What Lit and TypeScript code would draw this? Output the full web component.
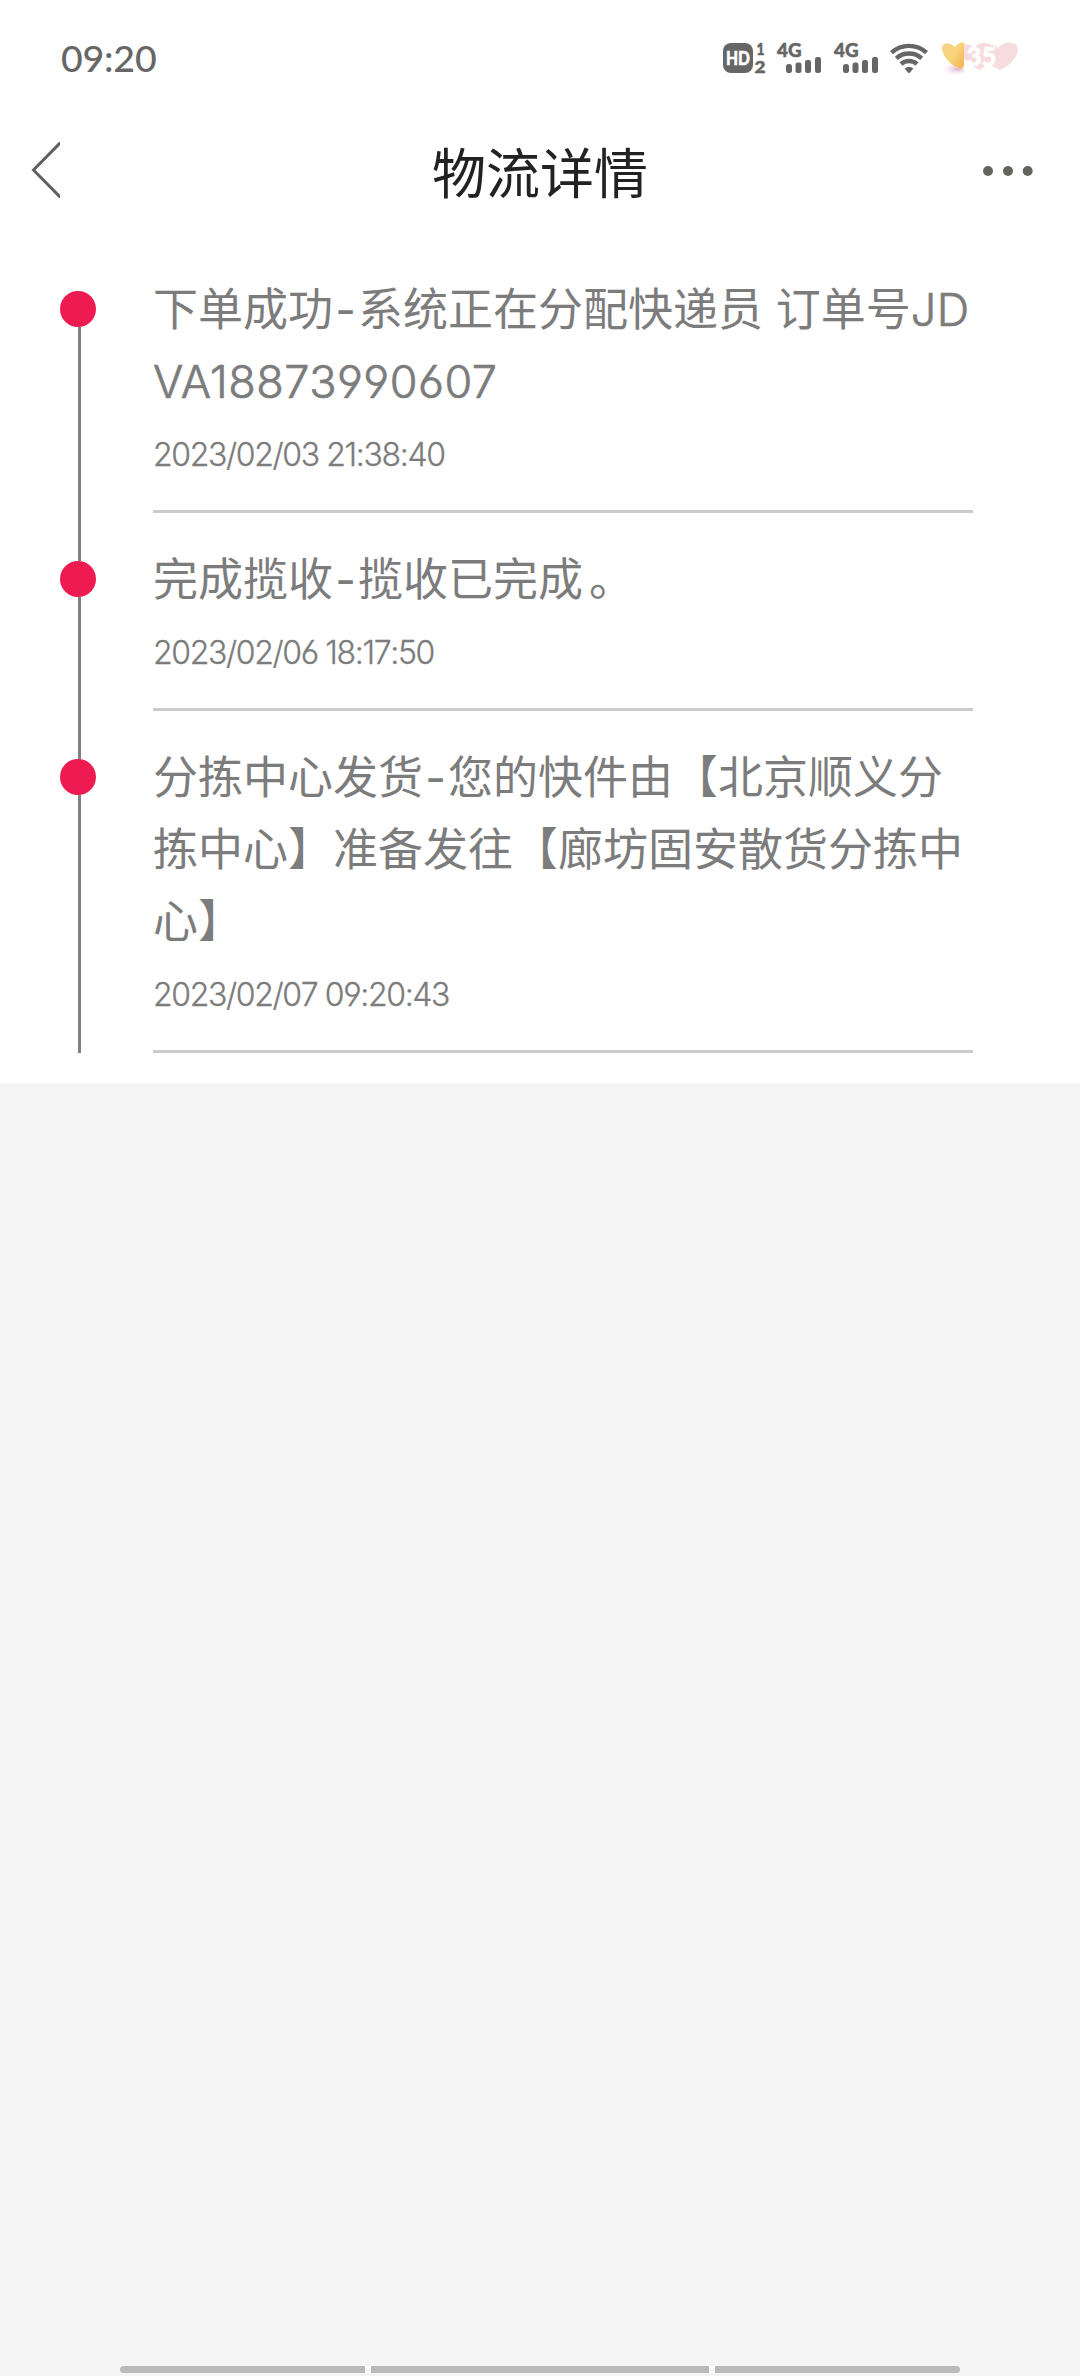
import { LitElement, html, css, svg } from "lit";
import { customElement, property } from "lit/decorators.js";

type Step = { lines: string[]; time: string };

const STEPS: Step[] = [
  {
    lines: ["下单成功-系统正在分配快递员 订单号JD", "VA18873990607"],
    time: "2023/02/03 21:38:40",
  },
  { lines: ["完成揽收-揽收已完成。"], time: "2023/02/06 18:17:50" },
  {
    lines: ["分拣中心发货-您的快件由【北京顺义分", "拣中心】准备发往【廊坊固安散货分拣中", "心】"],
    time: "2023/02/07 09:20:43",
  },
];

@customElement("status-bar")
class StatusBar extends LitElement {
  static styles = css`
    :host {
      display: flex;
      justify-content: space-between;
      height: 113px;
      padding: 0 60px;
      box-sizing: border-box;
      color: #666;
    }
    .clock {
      padding-left: 1px;
      font: 500 37.5px/116px Lato, sans-serif;
      letter-spacing: -0.2px;
    }
    .icons {
      display: block;
      width: 300px;
      height: 80px;
      flex: none;
    }
    .tag {
      font-family: Lato, sans-serif;
      font-weight: 900;
      fill: #666;
      stroke: #666;
      stroke-width: 0.5px;
    }
    .light {
      fill: #fff;
      stroke: #fff;
    }
  `;

  // One SIM: network label over four rounded bars of rising height.
  private signal(x: number) {
    return svg`
      <g transform="translate(${x} 0)" fill="#666">
        <text class="tag" x="0" y="57" font-size="19.5" textLength="24.5" lengthAdjust="spacingAndGlyphs">4G</text>
        <rect x="9" y="64" width="6" height="9" rx="2.8"/>
        <rect x="18.5" y="62.5" width="6" height="10.5" rx="2.2"/>
        <rect x="28" y="60" width="6" height="13" rx="2.2"/>
        <rect x="38" y="57" width="6" height="16" rx="2.2"/>
      </g>`;
  }

  render() {
    return html`
      <span class="clock">09:20</span>
      <svg class="icons" viewBox="720 0 300 80">
        <defs>
          <linearGradient id="gold" x1="0" y1="0" x2="1" y2="0.6">
            <stop offset="0" stop-color="#f6d488"/>
            <stop offset="0.5" stop-color="#f9d47c"/>
            <stop offset="1" stop-color="#f2b24e"/>
          </linearGradient>
          <radialGradient id="glow">
            <stop offset="0" stop-color="#e2b6d2"/>
            <stop offset="1" stop-color="#f3d9ea" stop-opacity="0"/>
          </radialGradient>
          <clipPath id="charge"><rect x="938" y="38" width="26" height="40"/></clipPath>
          <clipPath id="rest"><rect x="964" y="38" width="60" height="40"/></clipPath>
        </defs>
        <rect x="723" y="43" width="30" height="30" rx="8" fill="#666"/>
        <text class="tag light" x="726" y="65" font-size="19.5" textLength="24" lengthAdjust="spacingAndGlyphs">HD</text>
        <text class="tag" x="756.5" y="55" font-size="16.5" textLength="8" lengthAdjust="spacingAndGlyphs">1</text>
        <text class="tag" x="754.5" y="72.5" font-size="17.5" textLength="11" lengthAdjust="spacingAndGlyphs">2</text>
        ${this.signal(777)} ${this.signal(834)}
        <g fill="none" stroke="#666" stroke-width="4.4">
          <path d="M891.5 52.6A26 26 0 0 1 926.5 52.6"/>
          <path d="M896.3 58.4A19 19 0 0 1 921.7 58.4"/>
          <path d="M901 64A12 12 0 0 1 917 64"/>
        </g>
        <path d="M904.6 68.6Q909 65 913.4 68.6L910 72.4Q909 73.4 908 72.4Z" fill="#666"/>
        <g clip-path="url(#charge)">
          <ellipse cx="957" cy="69" rx="14" ry="6.5" fill="url(#glow)"/>
          <path d="M961 69C951 66 943 57 942 49C941 43 949 41 955 47C958 42 965 41 969 44C973 50 968 63 961 69Z" fill="url(#gold)"/>
        </g>
        <g clip-path="url(#rest)" fill="#f6dcde">
          <path d="M980 70C970 66 960 57 961 49C962 43 969 43 974 48C978 43 987 41 992 46C997 54 988 65 980 70Z"/>
          <path d="M1000 70C991 67 983 58 984 50C985 44 991 42 998 48C1003 42 1012 41 1017 46C1021 54 1010 66 1000 70Z"/>
        </g>
        <text class="tag light" x="966.5" y="65.5" font-size="26" textLength="30" lengthAdjust="spacingAndGlyphs">35</text>
      </svg>
    `;
  }
}

@customElement("title-bar")
class TitleBar extends LitElement {
  @property() heading = "";

  static styles = css`
    :host {
      display: grid;
      grid-template-columns: 1fr auto 1fr;
      align-items: center;
      height: 120px;
      padding: 0 45px 0 30px;
    }
    .back {
      display: block;
      width: 30px;
      height: 56px;
      margin-bottom: 6px;
    }
    .title {
      margin: 0 0 0 15px;
      padding-top: 4px;
      font: 400 54px/116px Inter, "Noto Sans CJK SC", sans-serif;
      color: #222;
    }
    .more {
      display: block;
      justify-self: end;
      width: 54px;
      height: 12px;
      margin-bottom: 4px;
    }
  `;

  render() {
    return html`
      <svg class="back" viewBox="0 0 30 56">
        <path d="M31 0L3.5 28L31 56" fill="none" stroke="#606060" stroke-width="3"/>
      </svg>
      <h1 class="title">${this.heading}</h1>
      <svg class="more" viewBox="0 0 54 12" fill="#64645f">
        <circle cx="7" cy="6" r="5"/>
        <circle cx="27" cy="6" r="5"/>
        <circle cx="46.7" cy="6" r="5"/>
      </svg>
    `;
  }
}

@customElement("track-step")
class TrackStep extends LitElement {
  @property({ attribute: false }) step!: Step;
  @property({ type: Boolean, reflect: true }) first = false;

  static styles = css`
    :host {
      display: grid;
      grid-template-columns: 93px 820px;
      padding-left: 60px;
      color: #7c7c7c;
      font-family: Inter, "Noto Sans CJK SC", sans-serif;
      font-feature-settings: "cv03", "cv04";
    }
    .rail {
      display: flex;
      flex-direction: column;
      width: 36px;
    }
    .stem {
      width: 3px;
      height: 48px;
      margin-left: 18px;
      background: #808080;
    }
    :host([first]) .stem {
      background: none;
    }
    .tail {
      height: auto;
      flex: 1;
    }
    :host([first]) .tail {
      background: #808080;
    }
    .dot {
      width: 36px;
      height: 36px;
      border-radius: 50%;
      background: #ed1b51;
    }
    .body {
      padding: 31px 0 19px;
      border-bottom: 3px solid #cbcbcb;
    }
    .line {
      font-size: 45px;
      line-height: 72px;
      white-space: pre;
    }
    .dash {
      padding: 0 2.15px;
    }
    .stop {
      padding-left: 6px;
    }
    .code {
      font-weight: 300;
      letter-spacing: 0.5px;
      -webkit-text-stroke: 0.7px #7c7c7c;
    }
    .time {
      font-size: 32px;
      font-weight: 300;
      line-height: 73px;
      letter-spacing: -1.36px;
      font-kerning: none;
      -webkit-text-stroke: 0.3px #7c7c7c;
    }
  `;

  private run(text: string) {
    return text.split(/(-|。|[A-Z0-9]+)/).map((part) =>
      part === "-"
        ? html`<span class="dash">-</span>`
        : part === "。"
          ? html`<span class="stop">。</span>`
          : /^[A-Z0-9]/.test(part)
            ? html`<span class="code">${part}</span>`
            : part
    );
  }

  render() {
    return html`
      <div class="rail">
        <div class="stem"></div>
        <div class="dot"></div>
        <div class="stem tail"></div>
      </div>
      <div class="body">
        ${this.step.lines.map((l) => html`<div class="line">${this.run(l)}</div>`)}
        <div class="time">${this.step.time}</div>
      </div>
    `;
  }
}

@customElement("app-root")
class AppRoot extends LitElement {
  static styles = css`
    :host {
      display: flex;
      flex-direction: column;
      height: 2376px;
      background: #f5f5f5;
      overflow: hidden;
    }
    .sheet {
      padding-bottom: 30px;
      background: #fff;
    }
    .steps {
      padding-top: 10px;
    }
    .nav {
      display: grid;
      grid-template-columns: 245px 338px 245px;
      gap: 6px;
      width: 840px;
      height: 7px;
      margin: auto auto 3px;
      border-radius: 4px;
      overflow: hidden;
      background: #fcfcfc;
    }
    .key {
      background: #bababa;
    }
  `;

  render() {
    return html`
      <div class="sheet">
        <status-bar></status-bar>
        <title-bar heading="物流详情"></title-bar>
        <div class="steps">
          ${STEPS.map((s, i) => html`<track-step .step=${s} ?first=${i === 0}></track-step>`)}
        </div>
      </div>
      <div class="nav">
        <div class="key"></div>
        <div class="key"></div>
        <div class="key"></div>
      </div>
    `;
  }
}
